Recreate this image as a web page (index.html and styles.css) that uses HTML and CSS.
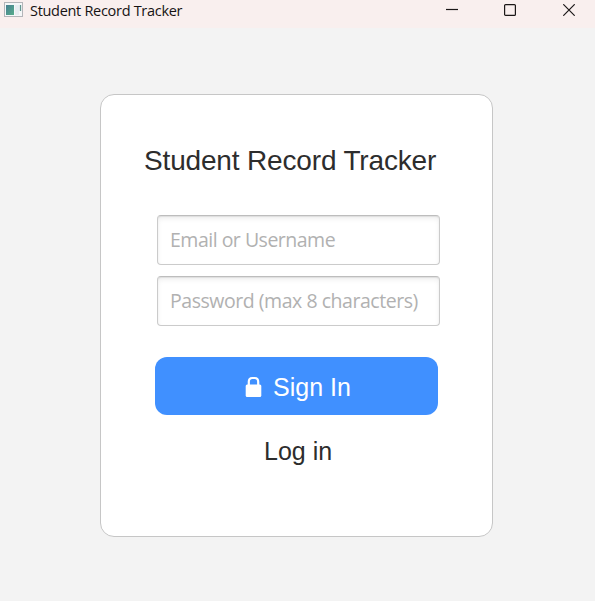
FILE: index.html
```
<!DOCTYPE html>
<html lang="en">
<head>
<meta charset="utf-8">
<title>Student Record Tracker</title>
<link rel="stylesheet" href="styles.css">
</head>
<body>
<header class="titlebar">
  <svg class="app-icon" width="19" height="16" viewBox="0 0 19 16">
    <defs><linearGradient id="pane" x1="0" y1="0" x2="1" y2="1"><stop offset="0" stop-color="#497f91"/><stop offset="1" stop-color="#56ad8b"/></linearGradient></defs>
    <rect x=".5" y=".5" width="18" height="14" fill="#f5f7f8" stroke="#b4b5b9"/>
    <rect x="2" y="3" width="8" height="10" fill="url(#pane)"/>
    <rect x="11" y="3" width="4" height="10" fill="#e7edf1"/>
    <path d="M16.5 3v6" stroke="#62958f" stroke-width="1.3"/>
  </svg>
  <span class="window-title">Student Record Tracker</span>
  <div class="controls">
    <svg width="12" height="12" viewBox="0 0 12 12"><path d="M0 5.5h12"/></svg>
    <svg width="12" height="12" viewBox="0 0 12 12"><rect x=".6" y=".6" width="10.8" height="10.8" rx="1"/></svg>
    <svg width="12" height="12" viewBox="0 0 12 12"><path d="M.3.3l11.4 11.4M11.7.3L.3 11.7"/></svg>
  </div>
</header>
<main class="stage">
  <form class="card">
    <h1 class="heading">Student Record Tracker</h1>
    <div class="fields">
      <input class="field" type="text" placeholder="Email or Username">
      <input class="field field-password" type="text" placeholder="Password (max 8 characters)">
    </div>
    <button class="sign-in" type="button">
      <svg width="17" height="22" viewBox="0 0 17 22"><rect x=".7" y="8.5" width="15.6" height="12.5" rx="1.5" fill="#fff"/><path d="M3.8 9V5.8Q3.8 2 7.3 2h2.4q3.5 0 3.5 3.8V9" fill="none" stroke="#fff" stroke-width="2.2"/></svg>
      <span>Sign In</span>
    </button>
    <a class="login">Log in</a>
  </form>
</main>
</body>
</html>
```
FILE: styles.css
```
* { box-sizing: border-box; }
body {
  margin: 0;
  height: 601px;
  overflow: hidden;
  background: #f3f3f3;
  font-family: "Liberation Sans", Arial, sans-serif;
  color: #2d2d2d;
}
.titlebar {
  height: 28px;
  padding: 2px 20px 0 4px;
  display: flex;
  align-items: flex-start;
  background: #f9efee;
}
.window-title {
  margin-left: 7px;
  font: 14.5px/18px "Open Sans", "Noto Sans", sans-serif;
  letter-spacing: -0.3px;
  color: #161313;
  white-space: nowrap;
}
.controls {
  margin: 2px 0 0 auto;
  display: flex;
  gap: 47px;
}
.controls svg {
  fill: none;
  stroke: #1b1717;
  stroke-width: 1.2;
}
.controls svg:first-child { margin-right: -1px; }
.stage { padding: 66px 0 0 100px; }
.card {
  width: 393px;
  height: 443px;
  padding: 48px 0 0;
  display: flex;
  flex-direction: column;
  background: #fff;
  border: 1px solid #c6c6c6;
  border-radius: 14px;
}
.heading {
  margin: 0 0 0 43px;
  font-size: 28px;
  line-height: 36px;
  font-weight: 400;
  letter-spacing: -0.16px;
  white-space: nowrap;
}
.fields {
  margin: 36px 0 0 56px;
  display: flex;
  flex-direction: column;
  gap: 11px;
}
.field {
  width: 283px;
  height: 50px;
  padding: 0 0 2px 12px;
  border: 1px solid #cbcbcb;
  border-top-color: #bdbdbd;
  border-radius: 4px;
  background: #fff;
  box-shadow: inset 0 1px 1px #dedede, inset 0 3px 5px #f0f0f0;
  font: 19.5px "Open Sans", "Noto Sans", sans-serif;
  letter-spacing: -0.5px;
}
.field-password { letter-spacing: -0.46px; }
.field::placeholder { color: #b1b1b1; opacity: 1; }
.sign-in {
  width: 283px;
  height: 58px;
  margin: 31px 0 0 54px;
  padding: 2px 0 0 3px;
  display: flex;
  align-items: center;
  justify-content: center;
  gap: 11px;
  border: 0;
  border-radius: 12px;
  background: #4090ff;
  color: #fff;
  font: 25px "Liberation Sans", Arial, sans-serif;
}
.login {
  margin: 20px 0 0 163px;
  font-size: 25px;
  line-height: 32px;
}
```
